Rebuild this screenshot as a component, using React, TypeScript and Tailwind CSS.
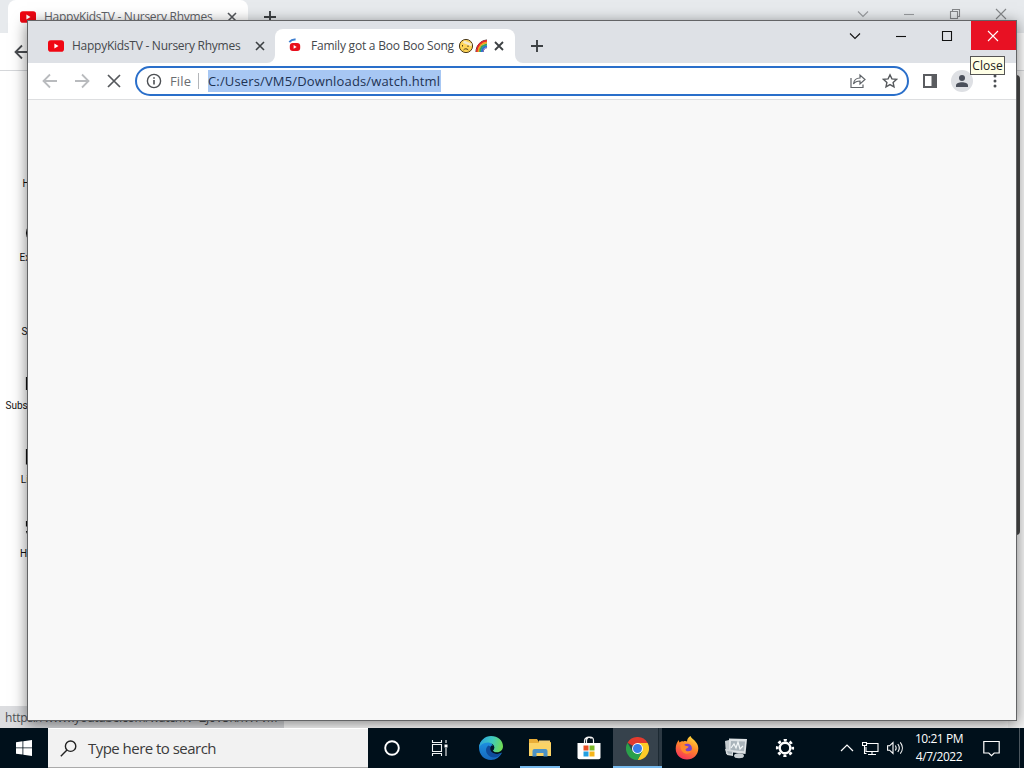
import { ReactNode } from "react";

type TGuideItem = {
  label: string;
  icon: ReactNode;
};

const guideItems: TGuideItem[] = [
  { label: "Home", icon: <path d="M4 21V10l8-7 8 7v11h-6v-6h-4v6z" /> },
  {
    label: "Explore",
    icon: (
      <>
        <circle cx="12" cy="12" r="9.5" />
        <path d="M16 8l-2.5 5.5L8 16l2.5-5.5z" />
      </>
    ),
  },
  { label: "Shorts", icon: <path d="M8 5l8-3 2 5-4 3 4 3-2 5-8 3-2-5 4-3-4-3z" /> },
  { label: "Subscriptions", icon: <path d="M2.500 8.500h19v12h-19zM5 5.500h14M10 12v5l5-2.500z" /> },
  { label: "Library", icon: <path d="M2.500 6v15h15M6.500 3h14v14h-14zM11 7v6l5-3z" /> },
  { label: "History", icon: <path d="M2.500 4v5h5M3 9a9 9 0 1 1-.5 5M12 7v5l4 2" /> },
];

function YoutubeLogo() {
  return (
    <svg className="shrink-0" width="16" height="16" viewBox="0 0 16 16">
      <rect x="0" y="2.300" width="16" height="11.400" rx="2.800" fill="#f00612" />
      <path d="M6.400 5.600v4.800l4.100-2.400z" fill="#fff" />
    </svg>
  );
}

// red favicon shrunk by the loading spinner
function LoadingFavicon() {
  return (
    <svg className="shrink-0" width="16" height="16" viewBox="0 0 16 16">
      <path d="M2.300 4.100C4 2.200 6.200 1.300 8.600 1.600" fill="none" stroke="#3f7fd0" strokeWidth="2" />
      <rect x="2.800" y="4.900" width="10.400" height="8" rx="3" fill="#e80f1d" />
      <path d="M6.600 7v3.800l3.100-1.900z" fill="#fff" />
    </svg>
  );
}

function CloseIcon({ size = 16, color = "#3c4043", width = 1.6 }: { size?: number; color?: string; width?: number }) {
  return (
    <svg className="shrink-0" width={size} height={size} viewBox="0 0 16 16">
      <path d="M4 4l8 8M12 4l-8 8" stroke={color} strokeWidth={width} />
    </svg>
  );
}

function PlusIcon() {
  return (
    <svg width="16" height="16" viewBox="0 0 16 16">
      <path d="M8 2v12M2 8h12" stroke="#3c4043" strokeWidth="1.900" />
    </svg>
  );
}

function ArrowIcon({ color, flip }: { color: string; flip?: boolean }) {
  return (
    <svg className={flip ? "shrink-0 rotate-180" : "shrink-0"} width="16" height="16" viewBox="0 0 16 16">
      <path d="M15 8H2M8 1.500L1.500 8 8 14.500" fill="none" stroke={color} strokeWidth="1.800" />
    </svg>
  );
}

function CaptionIcon({ name, color }: { name: "down" | "min" | "max" | "restore" | "close"; color: string }) {
  const paths = {
    down: "M1 3.500l5 5 5-5",
    min: "M1 6.500h10",
    max: "M1.500 1.500h9v9h-9z",
    restore: "M1.500 3.500h7v7h-7zM3.500 3.500v-2h7v7h-2",
    close: "M1 1l10 10M11 1L1 11",
  };
  return (
    <svg width="12" height="12" viewBox="0 0 12 12">
      <path d={paths[name]} fill="none" stroke={color} strokeWidth="1.100" />
    </svg>
  );
}

function BackWindow() {
  return (
    <div className="relative flex min-h-0 flex-1 flex-col overflow-hidden bg-white">
      <div className="flex h-[33px] shrink-0 bg-[#e7eaed]">
        <div className="ml-2 flex w-[240px] items-center rounded-t-lg bg-white pl-3">
          <YoutubeLogo />
          <span className="ml-2 w-[172px] whitespace-nowrap text-[12px] tracking-[-0.26px] text-[#5f6368]">
            HappyKidsTV - Nursery Rhymes
          </span>
          <span className="ml-[8px]">
            <CloseIcon color="#55585c" />
          </span>
        </div>
        <div className="ml-[14px] flex items-center">
          <PlusIcon />
        </div>
        <div className="ml-auto flex h-[28px] items-center">
          <div className="flex w-[46px] justify-center"><CaptionIcon name="down" color="#999c9f" /></div>
          <div className="flex w-[46px] justify-center"><CaptionIcon name="min" color="#999c9f" /></div>
          <div className="flex w-[46px] justify-center"><CaptionIcon name="restore" color="#85878a" /></div>
          <div className="flex w-[46px] justify-center"><CaptionIcon name="close" color="#85878a" /></div>
        </div>
      </div>
      <div className="flex h-[38px] shrink-0 items-center border-b border-[#d5d7da] pl-[14px]">
        <ArrowIcon color="#4a4d51" />
      </div>
      <div className="flex flex-1">
        <div className="flex w-[72px] flex-col pt-[60px]">
          {guideItems.map((item) => (
            <div key={item.label} className="flex h-[74px] shrink-0 flex-col items-center pt-4">
              <svg width="24" height="24" viewBox="0 0 24 24" fill="none" stroke="#111" strokeWidth="1.200">
                {item.icon}
              </svg>
              <span className="mt-[6px] font-[Roboto,sans-serif] text-[10px] leading-[14px] text-[#111]">
                {item.label}
              </span>
            </div>
          ))}
        </div>
        <div className="ml-auto w-[16px] bg-[#f6f6f6] pt-1">
          <div className="ml-1 h-[460px] w-2 rounded-lg bg-[#4a4a4a]" />
        </div>
      </div>
      <div className="absolute bottom-0 left-0 h-[22px] w-[284px] whitespace-nowrap bg-[#dcdde0] pl-[5px] pt-[3px] text-[12px] leading-[17px] tracking-[-0.22px] text-[#4f5256]">
        https://www.youtube.com/watch?v=ZJ0V5KnW7vM
      </div>
    </div>
  );
}

function TabStrip() {
  return (
    <div className="flex h-[42px] shrink-0 bg-[#dee1e6]">
      <div className="mt-2 flex h-[34px] w-[247px] items-center pl-5">
        <YoutubeLogo />
        <span className="ml-2 w-[172px] whitespace-nowrap text-[12px] tracking-[-0.26px] text-[#45484c]">
          HappyKidsTV - Nursery Rhymes
        </span>
        <span className="ml-[8px]">
          <CloseIcon />
        </span>
      </div>
      <div className="relative mt-2 flex h-[34px] w-[240px] items-center rounded-t-lg bg-white pl-3">
        <svg className="absolute -left-2 bottom-0" width="8" height="8"><path d="M8 0v8H0a8 8 0 0 0 8-8z" fill="#fff" /></svg>
        <svg className="absolute -right-2 bottom-0" width="8" height="8"><path d="M0 0v8h8a8 8 0 0 1-8-8z" fill="#fff" /></svg>
        <LoadingFavicon />
        <span className="ml-2 w-[147px] whitespace-nowrap text-[12px] tracking-[-0.22px] text-[#45484c]">
          Family got a Boo Boo Song
        </span>
        <svg className="shrink-0" width="16" height="16" viewBox="0 0 16 16">
          <circle cx="8" cy="8" r="6.600" fill="#ffd557" stroke="#4b3a1c" />
          <path d="M6 2.500l8 3.200-.6 2.500L5 5z" fill="#f3ead0" />
          <path d="M4.500 7v1.500M10 7.500V9M5.500 12c1.300-1.600 3.400-1.600 4.800 0" fill="none" stroke="#4b3a1c" />
        </svg>
        <svg className="shrink-0" width="16" height="16" viewBox="0 0 16 16" fill="none" strokeWidth="2">
          <path d="M2 14C2 7.500 6.500 2.500 13 2" stroke="#3b2a2a" strokeWidth="1" />
          <path d="M3 14C3 7.800 7 3.300 13 2.900" stroke="#e3262f" />
          <path d="M4.500 14C4.500 8.500 8 5 13 4.600" stroke="#f5a11c" />
          <path d="M6.200 14c0-4.300 2.700-7 6.800-7.500" stroke="#3aa655" />
          <path d="M7.800 14c0-3.300 2-5.400 5.200-5.800" stroke="#2775d0" />
          <path d="M9.200 14c0-2.500 1.600-4 3.800-4.300" stroke="#65409b" strokeWidth="1" />
        </svg>
        <span className="ml-[1px]">
          <CloseIcon width={1.8} />
        </span>
      </div>
      <div className="ml-[14px] mt-2 flex h-[34px] items-center">
        <PlusIcon />
      </div>
      <div className="ml-auto flex h-[29px]">
        <div className="flex w-[46px] items-center justify-center pr-[2px]"><CaptionIcon name="down" color="#111" /></div>
        <div className="flex w-[46px] items-center justify-center pr-[2px]"><CaptionIcon name="min" color="#111" /></div>
        <div className="flex w-[46px] items-center justify-center pr-[2px]"><CaptionIcon name="max" color="#111" /></div>
        <div className="flex w-[45px] items-center justify-center bg-[#e81123] pr-[2px]"><CaptionIcon name="close" color="#fff" /></div>
      </div>
    </div>
  );
}

function Toolbar() {
  return (
    <div className="flex h-[37px] shrink-0 items-center border-b border-[#dddee0] bg-white pl-[14px]">
      <ArrowIcon color="#b9bbbe" />
      <span className="ml-4 flex"><ArrowIcon color="#b9bbbe" flip /></span>
      <svg className="ml-4" width="16" height="16" viewBox="0 0 16 16">
        <path d="M2 2l12 12M14 2L2 14" stroke="#55585c" strokeWidth="1.700" />
      </svg>
      <div className="ml-[13px] flex h-[30px] w-[774px] items-center rounded-full border-2 border-[#2a6fca] pl-[9px] text-[14px]">
        <svg width="16" height="16" viewBox="0 0 16 16">
          <circle cx="8" cy="8" r="6.600" fill="none" stroke="#4c4f53" strokeWidth="1.400" />
          <path d="M8 7v4.500M8 4.300v1.500" stroke="#4c4f53" strokeWidth="1.600" />
        </svg>
        <span className="ml-2 w-[28px] pt-px text-[13px] tracking-[0.15px] text-[#6a6d71]">File</span>
        <span className="h-4 w-px bg-[#b4b6b9]" />
        <span className="ml-[9px] h-[22px] w-[233px] whitespace-nowrap bg-[#a7c7f3] text-[13px] leading-[23px] tracking-[0.15px] text-[#1e3353]">
          C:/Users/VM5/Downloads/watch.html
        </span>
        <svg className="ml-auto" width="18" height="16" viewBox="0 0 18 16" fill="none" stroke="#5f6368" strokeWidth="1.200">
          <path d="M2 5v9.500h12V11.500" />
          <path d="M4.500 11c.4-4 2.600-6 6.500-6V2l5 4.500-5 4.500V8c-3 0-5 .8-6.500 3z" />
        </svg>
        <svg className="ml-[15px] mr-[9px]" width="16" height="16" viewBox="0 0 16 16">
          <path d="M8 1.800l1.900 4.100 4.500.5-3.300 3 .9 4.400L8 11.600l-4 2.200.9-4.400-3.300-3 4.500-.5z" fill="none" stroke="#55585c" strokeWidth="1.400" />
        </svg>
      </div>
      <svg className="ml-[13px]" width="16" height="16" viewBox="0 0 16 16">
        <path d="M2 2h12v12H2z" fill="none" stroke="#5a5c60" strokeWidth="2" />
        <path d="M9.500 2H15v12H9.500z" fill="#5a5c60" />
      </svg>
      <div className="ml-[13px] flex h-[22px] w-[22px] items-center justify-center rounded-full bg-[#dee0e4]">
        <svg width="14" height="14" viewBox="0 0 14 14" fill="#4a4f5a">
          <circle cx="7" cy="3.900" r="3" />
          <path d="M1 13v-1.500C1 9.500 4 8.300 7 8.300s6 1.200 6 3.200V13z" />
        </svg>
      </div>
      <svg className="ml-[14px]" width="16" height="16" viewBox="0 0 16 16" fill="#4c4f53">
        <circle cx="8" cy="3" r="1.500" />
        <circle cx="8" cy="8" r="1.500" />
        <circle cx="8" cy="13" r="1.500" />
      </svg>
    </div>
  );
}

function FrontWindow() {
  return (
    <div className="absolute left-[27px] top-[20px] flex h-[701px] w-[990px] flex-col border border-[#636466] bg-[#f8f8f8] shadow-[0_3px_14px_rgba(0,0,0,0.5)]">
      <TabStrip />
      <Toolbar />
      <div className="flex-1" />
      <div className="absolute left-[942px] top-[35px] flex h-[19px] w-[35px] items-center justify-center border border-[#555] bg-[#ffffe6] text-[12px] text-[#222]">
        Close
      </div>
    </div>
  );
}

function EdgeLogo() {
  return (
    <svg width="24" height="24" viewBox="0 0 24 24">
      <defs>
        <linearGradient id="edgeTop" x1="0" y1="0.2" x2="1" y2="0.4">
          <stop offset="0" stopColor="#2a9fe0" />
          <stop offset="0.550" stopColor="#3fcbbd" />
          <stop offset="1" stopColor="#6fdb56" />
        </linearGradient>
        <linearGradient id="edgeLow" x1="0" y1="0" x2="0" y2="1">
          <stop offset="0" stopColor="#1e96e6" />
          <stop offset="1" stopColor="#1668bd" />
        </linearGradient>
      </defs>
      <path d="M0 11.500C1 4 6 2 11 4l3 6-3 4c1 4 6 5.500 12 2.500C21 21 17 24 12 24 5 24 0 18.500 0 11.500z" fill="url(#edgeLow)" />
      <path d="M0 11.500C.7 4.700 6 0 12 0c7 0 12 4.700 12 10.300 0 3.600-2.500 6-6 6-3 0-4.200-1-4-1.900.2-.7 1.200-1 1.200-3C15.200 9 12.500 6.500 8.500 6.500 4.500 6.500 1.500 8.700 0 11.500z" fill="url(#edgeTop)" />
      <path d="M9.500 9.500c-3.500 2-3.500 8 1.500 11 4 2 8.500 1 11.500-3.500-3 1.500-8.500 1.500-10.500-2-.8-1.500-.5-3 .3-4z" fill="#0f4c9c" />
      <path d="M12.300 9.700c1.800-.6 3 .3 3 1.800 0 1.700-1.300 2.200-1.300 3 0 1 1.500 1.800 4 1.800-3 .7-6.300-.6-6.700-3.200-.2-1.300.2-2.600 1-3.400z" fill="#02152a" />
    </svg>
  );
}

function ExplorerIcon() {
  return (
    <svg width="22" height="20" viewBox="0 0 22 20">
      <path d="M0 1h8l2 3h12v14H0z" fill="#e9ad37" />
      <path d="M0 5h22v13H0z" fill="#fbd366" />
      <path d="M10 2.500h11V5H10z" fill="#f4cf72" />
      <path d="M3.500 18.500V13a2 2 0 0 1 2-2h11a2 2 0 0 1 2 2v5.500h-4V15h-7v3.500z" fill="#4c92c6" />
    </svg>
  );
}

function StoreIcon() {
  return (
    <svg width="24" height="24" viewBox="0 0 24 24">
      <path d="M7.500 8V5a4 4 0 0 1 7-2.500M9.500 8V4.500a3.500 3.500 0 0 1 7 0V8" fill="none" stroke="#f4f4f4" strokeWidth="1.200" />
      <path d="M.5 7h23v14.500a1.800 1.800 0 0 1-1.800 1.800H2.300A1.800 1.800 0 0 1 .5 21.500z" fill="#fff" />
      <path d="M6.500 9.500h5v5h-5z" fill="#e74f25" />
      <path d="M12.500 9.500h5v5h-5z" fill="#7cb928" />
      <path d="M6.500 15.500h5v5h-5z" fill="#239fe1" />
      <path d="M12.500 15.500h5v5h-5z" fill="#f6b51b" />
    </svg>
  );
}

function ChromeLogo() {
  return (
    <svg width="23" height="23" viewBox="0 0 24 24">
      <path d="M12 12L1.600 6a12 12 0 0 1 20.800 0z" fill="#e33b2e" />
      <path d="M12 12h0L22.400 6A12 12 0 0 1 12 24l5-9z" fill="#fccb27" />
      <path d="M12 12l5 3-5 9A12 12 0 0 1 1.600 6l5.200 9z" fill="#2aa04a" />
      <path d="M12 6.300h10.500L17 15z" fill="#fccb27" />
      <circle cx="12" cy="12" r="5.700" fill="#fff" />
      <circle cx="12" cy="12" r="4.700" fill="#3a7de8" />
    </svg>
  );
}

function FirefoxLogo() {
  return (
    <svg width="24" height="24" viewBox="0 0 24 24">
      <defs>
        <linearGradient id="fox" x1="0.8" y1="0" x2="0.3" y2="1">
          <stop offset="0" stopColor="#ffe13f" />
          <stop offset="0.450" stopColor="#ff8a28" />
          <stop offset="1" stopColor="#f5315b" />
        </linearGradient>
      </defs>
      <path d="M15.500 0c1 2.500 3.500 3.500 5.300 6 1.700 2 2.500 4 2.500 6.500C23.300 19 18.200 23.500 12 23.500S.7 19 .7 12.700C.7 9 2 6 3.800 4c.1 1.200.4 1.900.9 2.400C6 5.200 7.200 5.200 8.500 5.500 10 4.800 11.200 5 12 5.600 12 3.200 13.500 1 15.500 0z" fill="url(#fox)" />
      <circle cx="12.300" cy="12.300" r="4.600" fill="#7a43c9" />
      <path d="M5.500 9c2-1 4-.3 5.500 1 1 .2 2.500.1 2.500.7 0 1.200-2.700 1.600-3 3 .7 2 3.800 2 6 .6-.5 2.300-3 3.800-5.500 3.400C7.500 17 5 13.500 5.500 9z" fill="#ff8a2a" />
    </svg>
  );
}

function MonitorAppIcon() {
  return (
    <svg width="24" height="22" viewBox="0 0 24 22">
      <path d="M1 4l8-2v14l-7 1z" fill="#c3cace" />
      <path d="M5 1.500l18 .5-1.500 15L5 15z" fill="#dde2e5" />
      <path d="M7 4l14 .4-1 9.900L6.500 13z" fill="#a9b4bb" />
      <path d="M7 11l3-4 2 4 2-6 2 7 3-3" fill="none" stroke="#f3f7f8" strokeWidth="1.200" />
      <ellipse cx="15" cy="18.800" rx="5" ry="2.500" fill="#c9d0d4" />
      <path d="M1 12l8 1v6l-6-1z" fill="#d3d9dc" />
      <path d="M3 14l5 .7v2.500l-4-.6z" fill="#a5b0b7" />
    </svg>
  );
}

function GearIcon() {
  return (
    <svg width="20" height="20" viewBox="0 0 20 20" fill="none" stroke="#fff">
      <circle cx="10" cy="10" r="5.300" strokeWidth="2.400" />
      <circle cx="10" cy="10" r="7.800" strokeWidth="2.600" strokeDasharray="3.060 3.066" strokeDashoffset="1.530" />
    </svg>
  );
}

function Taskbar() {
  return (
    <div className="flex h-10 shrink-0 items-center bg-[#00101b]">
      <div className="flex w-12 justify-center">
        <svg width="16" height="16" viewBox="0 0 16 16" fill="#fff">
          <path d="M0 2.200l6.500-.9v6.200H0zM7.300 1.200L16 0v7.500H7.300zM0 8.300h6.500v6.300L0 13.700zM7.300 8.300H16V16l-8.700-1.200z" />
        </svg>
      </div>
      <div className="flex h-10 w-[320px] items-center border-y border-t-white border-b-[#aaa] bg-[#f2f2f2] pl-3">
        <svg width="17" height="17" viewBox="0 0 17 17" fill="none" stroke="#222" strokeWidth="1.400">
          <circle cx="10.600" cy="6.200" r="5.200" />
          <path d="M7 10L.8 16.200" />
        </svg>
        <span className="ml-[11px] whitespace-nowrap text-[15px] tracking-[-0.53px] text-[#3b3b3b]">Type here to search</span>
      </div>
      <div className="flex w-12 justify-center">
        <svg width="16" height="16" viewBox="0 0 16 16"><circle cx="8" cy="8" r="6.800" fill="none" stroke="#fff" strokeWidth="1.900" /></svg>
      </div>
      <div className="flex w-12 justify-center pr-px">
        <svg width="17" height="16" viewBox="0 0 17 16" fill="none" stroke="#f0f3f4" strokeWidth="1.100">
          <path d="M1.500 4.500h9v7h-9zM1.500 0v2.500h9V0M1.500 16v-2.500h9V16M15 0v3M15 8v8" />
          <path d="M13.500 4.500h3v3h-3z" fill="#fff" stroke="none" />
        </svg>
      </div>
      <div className="ml-[2px] flex w-[49px] justify-center"><EdgeLogo /></div>
      <div className="flex h-10 w-[49px] justify-center px-1">
        <div className="flex w-10 items-center justify-center border-b-2 border-[#76b9ed] pt-[2px]"><ExplorerIcon /></div>
      </div>
      <div className="flex w-[49px] justify-center pb-px"><StoreIcon /></div>
      <div className="flex h-10 w-[49px] border-b-2 border-[#76b9ed] bg-[#36424c]">
        <div className="flex flex-1 items-center justify-center pl-[3px] pt-[2px]"><ChromeLogo /></div>
        <div className="w-[4px] border-l border-[#1c2932] bg-[#2c3943]" />
      </div>
      <div className="flex w-[49px] justify-center"><FirefoxLogo /></div>
      <div className="flex w-[49px] justify-center"><MonitorAppIcon /></div>
      <div className="flex w-[49px] justify-center"><GearIcon /></div>
      <div className="ml-[26px] flex w-6 justify-center">
        <svg width="14" height="8" viewBox="0 0 14 8"><path d="M1 7l6-6 6 6" fill="none" stroke="#fff" strokeWidth="1.200" /></svg>
      </div>
      <div className="flex w-6 justify-center pr-px">
        <svg width="17" height="15" viewBox="0 0 17 15" fill="none" stroke="#fff" strokeWidth="1.100">
          <path d="M5 2.500h11v8H4V6M10 10.500v3M6 13.500h8M.5 1.500h4v3h-4zM2.500 4.500v8h2" />
        </svg>
      </div>
      <div className="flex w-6 justify-center">
        <svg width="17" height="14" viewBox="0 0 17 14" fill="none" stroke="#fff" strokeWidth="1.100">
          <path d="M.6 4.800h2L6 1.500v11L2.600 9.200h-2zM8.300 4.500c1 1.500 1 3.500 0 5M10.800 3c1.800 2.400 1.800 5.600 0 8M13.300 1.300c2.700 3.400 2.700 8 0 11.400" />
        </svg>
      </div>
      <div className="flex w-16 flex-col items-center whitespace-nowrap text-[12px] leading-[18px] tracking-[-0.45px] text-white">
        <span>10:21 PM</span>
        <span>4/7/2022</span>
      </div>
      <div className="flex w-10 justify-center">
        <svg width="17" height="17" viewBox="0 0 17 17" fill="none" stroke="#fff" strokeWidth="1.200">
          <path d="M.8 1.500h15.400v11.500h-5l-2.700 2.700L5.800 13h-5z" />
        </svg>
      </div>
      <div className="ml-2 h-10 w-px bg-[#4b565e]" />
    </div>
  );
}

export default function App() {
  return (
    <div className="relative flex h-[768px] w-[1024px] flex-col overflow-hidden bg-white font-['Open_Sans','Noto_Sans',sans-serif]">
      <BackWindow />
      <FrontWindow />
      {/* taskbar stays above the window shadow */}
      <div className="relative">
        <Taskbar />
      </div>
    </div>
  );
}
